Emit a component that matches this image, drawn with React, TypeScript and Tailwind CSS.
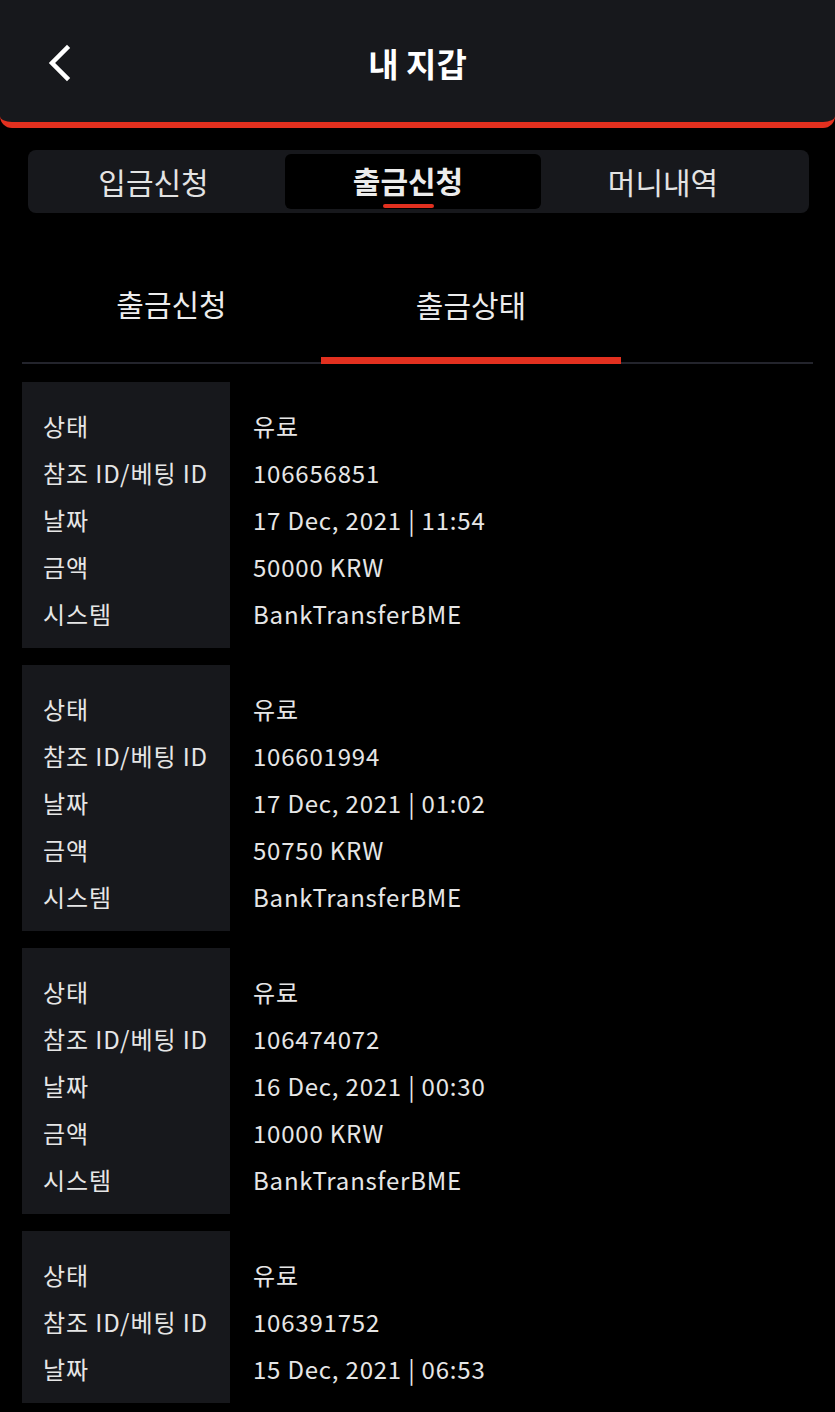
import React from "react";

type Row = [string, string];

const cards: Row[][] = [
  [
    ["상태", "유료"],
    ["참조 ID/베팅 ID", "106656851"],
    ["날짜", "17 Dec, 2021 | 11:54"],
    ["금액", "50000 KRW"],
    ["시스템", "BankTransferBME"],
  ],
  [
    ["상태", "유료"],
    ["참조 ID/베팅 ID", "106601994"],
    ["날짜", "17 Dec, 2021 | 01:02"],
    ["금액", "50750 KRW"],
    ["시스템", "BankTransferBME"],
  ],
  [
    ["상태", "유료"],
    ["참조 ID/베팅 ID", "106474072"],
    ["날짜", "16 Dec, 2021 | 00:30"],
    ["금액", "10000 KRW"],
    ["시스템", "BankTransferBME"],
  ],
  [
    ["상태", "유료"],
    ["참조 ID/베팅 ID", "106391752"],
    ["날짜", "15 Dec, 2021 | 06:53"],
  ],
];

const font = { fontFamily: '"Noto Sans CJK KR", "Noto Sans", sans-serif' };

export default function App() {
  return (
    <div className="w-[835px] h-[1412px] overflow-hidden bg-black text-[#e6e6e6]" style={font}>
      <header className="relative h-[128px] bg-[#17181c] rounded-b-[12px] border-b-[6px] border-[#e2301f] flex items-center justify-center">
        <svg
          className="absolute left-[44px] top-[44px]"
          width="30"
          height="38"
          viewBox="0 0 30 38"
          fill="none"
        >
          <path d="M23 4 L8 19 L23 34" stroke="white" strokeWidth="4.5" strokeLinecap="square" />
        </svg>
        <h1 className="text-[33px] font-bold text-white leading-none pt-[4px]">내 지갑</h1>
      </header>

      <div className="ml-[28px] w-[781px] mt-[22px] h-[63px] rounded-[8px] bg-[#17181c] p-[4px] flex">
        <div className="w-[253px] flex items-center justify-center pr-[10px] text-[30px] text-[#e3e3e3]">입금신청</div>
        <div className="w-[256px] relative rounded-[6px] bg-black flex items-center justify-center pr-[10px] text-[30px] font-bold text-[#ececec]">
          <span className="pb-[2px]">출금신청</span>
          <div className="absolute bottom-[1px] left-[98px] w-[51px] h-[4px] rounded-full bg-[#e2301f]" />
        </div>
        <div className="flex-1 flex items-center justify-center pr-[20px] text-[30px] text-[#e3e3e3]">머니내역</div>
      </div>

      <nav className="mx-[22px] mt-[31px] flex border-b-[2px] border-[#23242c]">
        <div className="w-[299px] h-[118px] flex flex-col">
          <div className="flex-1 flex items-center justify-center pt-[7px] text-[30px] text-[#ececec]">출금신청</div>
          <div className="h-[7px]" />
        </div>
        <div className="w-[300px] h-[118px] flex flex-col">
          <div className="flex-1 flex items-center justify-center pt-[7px] text-[30px] text-[#ececec]">출금상태</div>
          <div className="h-[7px] -mb-[2px] bg-[#e2301f]" />
        </div>
      </nav>

      <div className="mt-[18px] flex flex-col gap-[17px]">
        {cards.map((rows, i) => (
          <div key={i} className="mx-[22px] flex">
            <div className="w-[208px] bg-[#17181c] pl-[21px] pt-[20px] pb-[11px]">
              {rows.map(([k]) => (
                <div key={k} className="h-[47px] flex items-center text-[24px] tracking-[0.9px] whitespace-nowrap">
                  {k}
                </div>
              ))}
            </div>
            <div className="flex-1 pl-[23px] pt-[20px] pb-[11px]">
              {rows.map(([k, v]) => (
                <div key={k} className="h-[47px] flex items-center text-[24px] tracking-[0.8px] whitespace-nowrap">
                  {v}
                </div>
              ))}
            </div>
          </div>
        ))}
      </div>
    </div>
  );
}
